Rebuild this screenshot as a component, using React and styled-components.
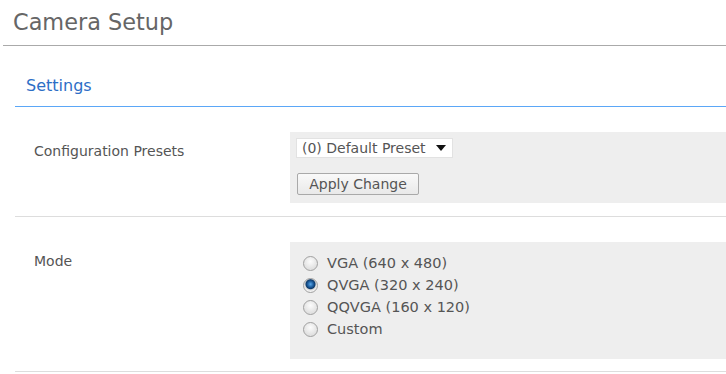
import styled, { createGlobalStyle } from 'styled-components'

const GlobalStyle = createGlobalStyle`
  body {
    margin: 0;
    background: #fff;
    font-family: "DejaVu Sans", Verdana, sans-serif;
  }
`;

const Page = styled.div`
  width: 726px;
`;

const Header = styled.div`
  margin-left: 3px;
  height: 45px;
  padding-left: 10px;
  border-bottom: 1px solid #aaaaaa;
  display: flex;
  align-items: flex-start;
`;

const Title = styled.h1`
  margin: 9px 0 0;
  font-size: 22.4px;
  line-height: 26px;
  font-weight: normal;
  color: #666;
`;

const Section = styled.div`
  margin-left: 15px;
`;

const SectionHead = styled.div`
  height: 60px;
  padding-left: 11px;
  border-bottom: 1px solid #5ba7f7;
  display: flex;
  align-items: center;
`;

const SectionTitle = styled.h2`
  margin: 20px 0 0;
  font-size: 16px;
  line-height: 20px;
  font-weight: normal;
  color: #2d6ec6;
`;

const Row = styled.div`
  display: flex;
  padding: ${(p) => p.pad};
  border-bottom: 1px solid #dddddd;
`;

const Label = styled.div`
  width: 256px;
  padding-left: 19px;
  padding-top: ${(p) => p.top}px;
  font-size: 14px;
  line-height: 17px;
  color: #555;
`;

const Box = styled.div`
  flex: 1;
  background: #eeeeee;
  padding: ${(p) => p.pad};
  display: flex;
  flex-direction: column;
  align-items: flex-start;
`;

const Select = styled.div`
  width: 144px;
  height: 18px;
  background: #fff;
  border: 1px solid #e2e2e2;
  display: flex;
  align-items: center;
  justify-content: space-between;
  padding: 0 6px 0 5px;
  margin-left: -1px;
  font-size: 14px;
  color: #555;
`;

const Caret = styled.span`
  width: 0;
  height: 0;
  border-left: 5px solid transparent;
  border-right: 5px solid transparent;
  border-top: 6px solid #111;
`;

const Button = styled.button`
  margin-top: 15px;
  height: 22px;
  width: 122px;
  padding: 0;
  font-family: inherit;
  font-size: 14px;
  color: #555;
  border: 1px solid #a9a9a9;
  border-radius: 2px;
  background: linear-gradient(#f9f9f9, #e9e9e9);
`;

const Option = styled.label`
  display: flex;
  align-items: center;
  height: 22px;
  font-size: 14.5px;
  color: #555;
`;

const Radio = styled.span`
  flex: none;
  width: 15px;
  height: 15px;
  border-radius: 50%;
  border: 1px solid #a0a0a0;
  margin: 0 9px 0 6px;
  background: ${(p) =>
    p.checked
      ? 'radial-gradient(circle at 50% 40%, #5aa8ea 0, #1c5b9c 3px, #0d3a6a 4.5px, #d6d6d6 5.5px, #f4f4f4 7px)'
      : 'radial-gradient(circle at 50% 35%, #fcfcfc 0, #e2e2e2 7px)'};
  box-sizing: border-box;
`;

const modes = [
  ['VGA (640 x 480)', false],
  ['QVGA (320 x 240)', true],
  ['QQVGA (160 x 120)', false],
  ['Custom', false],
];

export default function App() {
  return (
    <Page>
      <GlobalStyle />
      <Header>
        <Title>Camera Setup</Title>
      </Header>
      <Section>
        <SectionHead>
          <SectionTitle>Settings</SectionTitle>
        </SectionHead>
        <Row pad="25px 0 13px">
          <Label top={11}>Configuration Presets</Label>
          <Box pad="6px 7px 8px">
            <Select>
              <span>(0) Default Preset</span>
              <Caret />
            </Select>
            <Button>Apply Change</Button>
          </Box>
        </Row>
        <Row pad="25px 0 12px">
          <Label top={11}>Mode</Label>
          <Box pad="10px 7px 19px">
            {modes.map(([text, checked]) => (
              <Option key={text}>
                <Radio checked={checked} />
                {text}
              </Option>
            ))}
          </Box>
        </Row>
      </Section>
    </Page>
  )
}
